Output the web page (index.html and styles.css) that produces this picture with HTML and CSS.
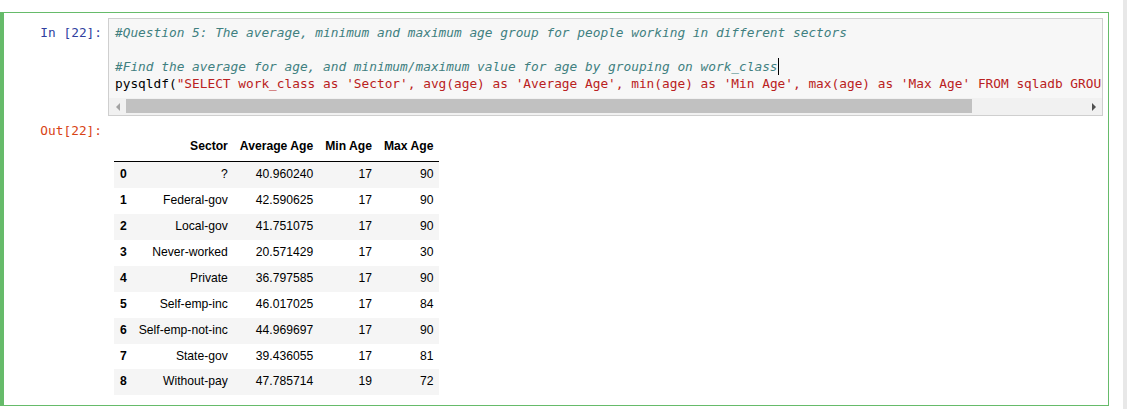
FILE: index.html
```html
<!DOCTYPE html>
<html>
<head>
<meta charset="utf-8">
<title>Notebook cell</title>
<link rel="stylesheet" href="styles.css">
</head>
<body>
<div class="page">
  <div class="notebook">
    <div class="cell">
      <div class="input">
        <div class="prompt prompt-in">In&nbsp;[22]:</div>
        <div class="input-area">
          <div class="code">
            <div class="line"><span class="c">#Question 5: The average, minimum and maximum age group for people working in different sectors</span></div>
            <div class="line">&nbsp;</div>
            <div class="line"><span class="c">#Find the average for age, and minimum/maximum value for age by grouping on work_class</span><span class="cursor"></span></div>
            <div class="line">pysqldf(<span class="s">"SELECT work_class as 'Sector', avg(age) as 'Average Age', min(age) as 'Min Age', max(age) as 'Max Age' FROM sqladb GROUP BY work_class"</span>)</div>
          </div>
          <div class="hscroll">
            <div class="sb-btn"><span class="arrow-left"></span></div>
            <div class="sb-track"><div class="sb-thumb"></div></div>
            <div class="sb-btn"><span class="arrow-right"></span></div>
          </div>
        </div>
      </div>
      <div class="output">
        <div class="prompt prompt-out">Out[22]:</div>
        <div class="output-area">
          <table class="df">
            <thead>
              <tr><th></th><th>Sector</th><th>Average Age</th><th>Min Age</th><th>Max Age</th></tr>
            </thead>
            <tbody>
              <tr><th>0</th><td>?</td><td>40.960240</td><td>17</td><td>90</td></tr>
              <tr><th>1</th><td>Federal-gov</td><td>42.590625</td><td>17</td><td>90</td></tr>
              <tr><th>2</th><td>Local-gov</td><td>41.751075</td><td>17</td><td>90</td></tr>
              <tr><th>3</th><td>Never-worked</td><td>20.571429</td><td>17</td><td>30</td></tr>
              <tr><th>4</th><td>Private</td><td>36.797585</td><td>17</td><td>90</td></tr>
              <tr><th>5</th><td>Self-emp-inc</td><td>46.017025</td><td>17</td><td>84</td></tr>
              <tr><th>6</th><td>Self-emp-not-inc</td><td>44.969697</td><td>17</td><td>90</td></tr>
              <tr><th>7</th><td>State-gov</td><td>39.436055</td><td>17</td><td>81</td></tr>
              <tr><th>8</th><td>Without-pay</td><td>47.785714</td><td>19</td><td>72</td></tr>
            </tbody>
          </table>
        </div>
      </div>
    </div>
  </div>
  <div class="gutter"></div>
</div>
</body>
</html>
```
FILE: styles.css
```css
html, body {
  margin: 0;
  padding: 0;
  background: #ffffff;
}

.page {
  display: flex;
  height: 100vh;
  overflow: hidden;
}

.notebook {
  width: 1109px;
  flex: none;
}

.gutter {
  margin-left: auto;
  width: 4px;
  background: #e8e8e8;
}

.cell {
  margin-top: 12px;
  border: 1px solid #66bb6a;
  border-left: 4px solid #66bb6a;
  padding: 5px 0 5px 0;
  box-sizing: border-box;
  width: 1109px;
}

.input, .output {
  display: flex;
}

.prompt {
  width: 104px;
  flex: none;
  box-sizing: border-box;
  text-align: right;
  padding-right: 6px;
  font-family: "DejaVu Sans Mono", monospace;
  font-size: 12.8px;
  line-height: 17px;
}

.prompt-in {
  color: #303f9f;
  padding-top: 6px;
}

.prompt-out {
  color: #d84315;
  padding-top: 6px;
}

.input-area {
  width: 995px;
  flex: none;
  border: 1px solid #cfcfcf;
  background: #f7f7f7;
  box-sizing: border-box;
  overflow: hidden;
}

.code {
  padding: 5px 0 6px 6px;
  font-family: "DejaVu Sans Mono", monospace;
  font-size: 12.8px;
  line-height: 17px;
  color: #000000;
  overflow: hidden;
}

.line {
  height: 17px;
  white-space: pre;
}

.c {
  color: #408080;
  font-style: italic;
}

.s {
  color: #ba2121;
}

.cursor {
  display: inline-block;
  width: 0;
  height: 17px;
  border-left: 1px solid #000000;
  vertical-align: top;
}

.hscroll {
  display: flex;
  height: 17px;
  background: #f1f1f1;
}

.sb-btn {
  width: 17px;
  flex: none;
  display: flex;
  align-items: center;
  justify-content: center;
}

.arrow-left {
  width: 0;
  height: 0;
  border-top: 4px solid transparent;
  border-bottom: 4px solid transparent;
  border-right: 4px solid #a3a3a3;
}

.arrow-right {
  width: 0;
  height: 0;
  border-top: 4px solid transparent;
  border-bottom: 4px solid transparent;
  border-left: 4px solid #505050;
}

.sb-track {
  flex: 1;
  display: flex;
  align-items: stretch;
}

.sb-thumb {
  width: 846px;
  margin: 1px 0 2px 0;
  background: #c1c1c1;
}

.output-area {
  padding: 18px 0 5px 6px;
}

.df {
  border-collapse: collapse;
  border-spacing: 0;
  border: none;
  font-family: "Liberation Sans", Arial, sans-serif;
  font-size: 12.15px;
  color: #000000;
}

.df th, .df td {
  text-align: right;
  vertical-align: middle;
  padding: 6px;
  line-height: 13.875px;
  white-space: nowrap;
}

.df thead {
  border-bottom: 1px solid #000000;
}

.df thead th {
  font-weight: bold;
  padding-bottom: 7.5px;
}

.df tbody th {
  font-weight: bold;
}

.df tbody tr:nth-child(odd) {
  background: #f5f5f5;
}
```
